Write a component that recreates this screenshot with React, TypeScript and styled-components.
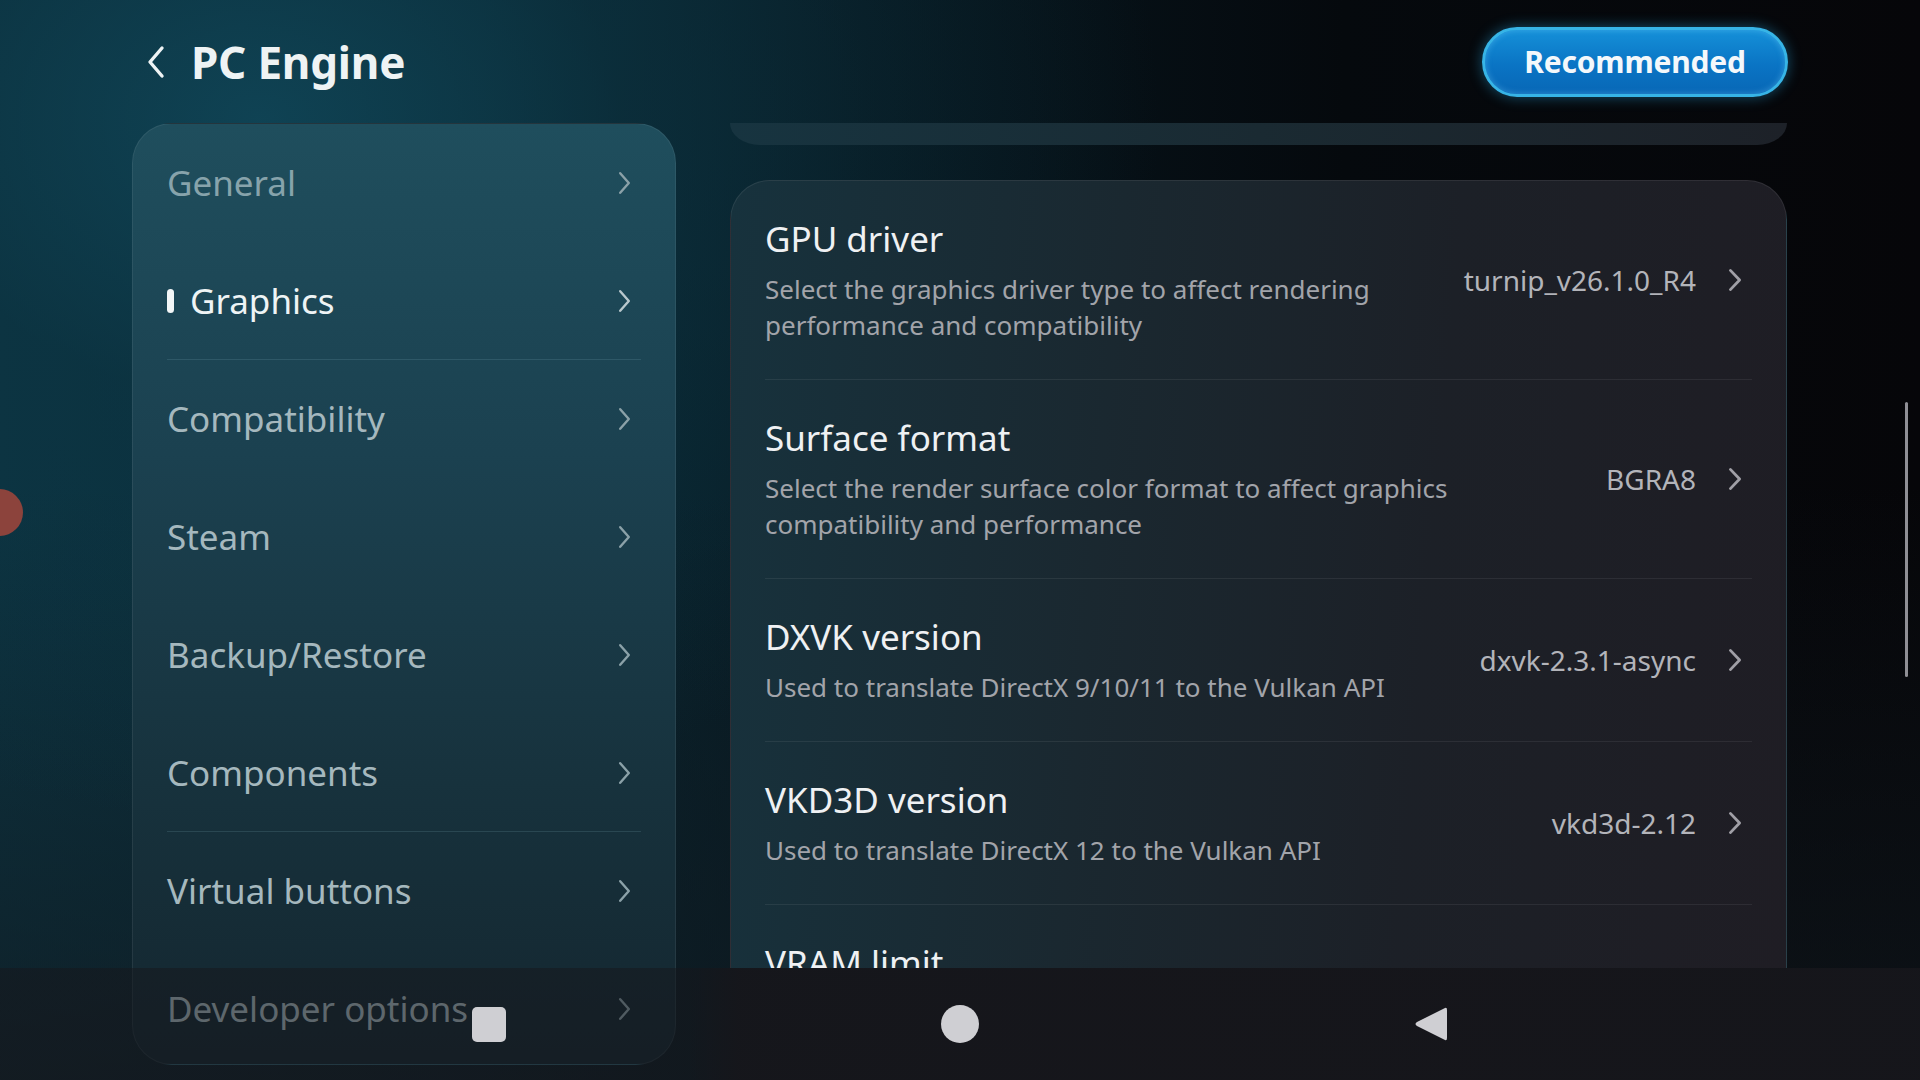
import React from 'react'
import styled, { createGlobalStyle } from 'styled-components'

const GlobalStyle = createGlobalStyle`
  html, body {
    margin: 0;
    padding: 0;
    background: #06080b;
  }
  * {
    box-sizing: border-box;
  }
`

const MENU = [
  { label: 'General', dim: true },
  { label: 'Graphics', active: true, divider: true },
  { label: 'Compatibility' },
  { label: 'Steam' },
  { label: 'Backup/Restore' },
  { label: 'Components', divider: true },
  { label: 'Virtual buttons' },
  { label: 'Developer options' },
]

const SETTINGS = [
  {
    title: 'GPU driver',
    desc: 'Select the graphics driver type to affect rendering performance and compatibility',
    value: 'turnip_v26.1.0_R4',
  },
  {
    title: 'Surface format',
    desc: 'Select the render surface color format to affect graphics compatibility and performance',
    value: 'BGRA8',
  },
  {
    title: 'DXVK version',
    desc: 'Used to translate DirectX 9/10/11 to the Vulkan API',
    value: 'dxvk-2.3.1-async',
  },
  {
    title: 'VKD3D version',
    desc: 'Used to translate DirectX 12 to the Vulkan API',
    value: 'vkd3d-2.12',
  },
  { title: 'VRAM limit', desc: '', value: '' },
]

const Screen = styled.div`
  position: relative;
  width: 1920px;
  height: 1080px;
  overflow: hidden;
  font-family: 'Noto Sans', 'Open Sans', sans-serif;
  background:
    radial-gradient(ellipse 900px 700px at 260px 120px, rgba(16, 70, 88, 0.85) 0%, rgba(12, 52, 66, 0.6) 40%, rgba(10, 40, 52, 0) 100%),
    linear-gradient(180deg, rgba(0, 0, 0, 0) 45%, rgba(16, 24, 30, 0.7) 100%),
    linear-gradient(90deg, #0c3442 0%, #0a2a36 25%, #07171f 45%, #05090d 70%, #060609 100%);
`

const Header = styled.header`
  height: 123px;
  display: flex;
  align-items: center;
  justify-content: space-between;
  padding: 0 132px 0 147px;
`

const TitleGroup = styled.div`
  display: flex;
  align-items: center;
  gap: 26px;
`

const Title = styled.h1`
  margin: 0;
  font-size: 44px;
  font-weight: 700;
  color: #eef3f4;
  letter-spacing: -0.2px;
`

const RecommendedButton = styled.button`
  width: 306px;
  height: 70px;
  border-radius: 35px;
  border: 3px solid #37b4e6;
  background: linear-gradient(180deg, #1590d8 0%, #0a74c4 55%, #0867b6 100%);
  box-shadow: 0 0 14px rgba(40, 170, 230, 0.45), inset 0 0 6px rgba(120, 210, 255, 0.4);
  color: #f4f8fb;
  font-family: 'Noto Sans', sans-serif;
  font-size: 30px;
  font-weight: 700;
  letter-spacing: -0.2px;
  cursor: pointer;
`

const Body = styled.div`
  display: flex;
  gap: 54px;
  padding: 0 133px 0 132px;
`

const SidePanel = styled.nav`
  width: 544px;
  height: 942px;
  flex-shrink: 0;
  padding: 0 34px;
  border-radius: 40px;
  border: 1.5px solid rgba(255, 255, 255, 0.07);
  background: linear-gradient(180deg, #1f4e5d 0%, #1b4150 35%, #17323d 70%, #14262f 100%);
`

const MenuItem = styled.div<{ $divider?: boolean }>`
  height: 118px;
  display: flex;
  align-items: center;
  justify-content: space-between;
  padding-right: 10px;
  border-bottom: 1px solid ${(p) => (p.$divider ? 'rgba(140, 190, 205, 0.16)' : 'transparent')};
`

const MenuLabel = styled.span<{ $active?: boolean; $dim?: boolean }>`
  display: flex;
  align-items: center;
  gap: 16px;
  font-size: 35px;
  color: ${(p) => (p.$active ? '#eef4f5' : p.$dim ? '#87a3ab' : '#a5b8be')};
`

const ActiveBar = styled.span`
  width: 7px;
  height: 24px;
  border-radius: 4px;
  background: #f2f6f7;
`

const Content = styled.section`
  flex: 1;
  height: 845px;
  overflow: hidden;
  display: flex;
  flex-direction: column;
  gap: 35px;
`

const PrevCardEdge = styled.div`
  height: 22px;
  flex-shrink: 0;
  border-radius: 0 0 30px 30px / 0 0 22px 22px;
  background: linear-gradient(90deg, #173440 0%, #1a2a32 50%, #1d2128 100%);
`

const Card = styled.div`
  flex-shrink: 0;
  padding: 0 34px;
  border-radius: 40px;
  border: 1.5px solid rgba(255, 255, 255, 0.08);
  background: linear-gradient(95deg, #17323d 0%, #1a2830 35%, #1c2027 65%, #1f1d24 100%);
`

const Row = styled.div`
  display: flex;
  align-items: center;
  justify-content: space-between;
  gap: 40px;
  padding: 35px 0 36px;
  border-bottom: 1px solid rgba(255, 255, 255, 0.07);
`

const RowText = styled.div`
  max-width: 720px;
`

const RowTitle = styled.div`
  font-size: 35px;
  line-height: 46px;
  color: #eff1f3;
`

const RowDesc = styled.div`
  margin-top: 9px;
  font-size: 26px;
  line-height: 36px;
  color: #a2a4aa;
`

const RowValue = styled.div`
  display: flex;
  align-items: center;
  gap: 32px;
  padding-right: 10px;
  font-size: 28px;
  color: #b3b4ba;
  white-space: nowrap;
`

const ScrollThumb = styled.div`
  position: absolute;
  left: 1905px;
  top: 402px;
  width: 3px;
  height: 275px;
  border-radius: 2px;
  background: #8f8f95;
`

const FloatingDot = styled.div`
  position: absolute;
  left: -24px;
  top: 489px;
  width: 47px;
  height: 47px;
  border-radius: 50%;
  background: #8c433c;
`

const NavBar = styled.div`
  position: absolute;
  left: 0;
  right: 0;
  bottom: 0;
  height: 112px;
  display: flex;
  align-items: center;
  justify-content: center;
  gap: 431px;
  background: linear-gradient(90deg, rgba(22, 22, 27, 0.5) 0%, rgba(22, 22, 27, 0.5) 36%, rgba(22, 22, 27, 0.93) 38.5%, rgba(22, 22, 27, 0.95) 100%);
`

const NavSlot = styled.div`
  width: 40px;
  height: 40px;
  display: flex;
  align-items: center;
  justify-content: center;
`

const NavSquare = styled.div`
  width: 34px;
  height: 35px;
  border-radius: 5px;
  background: #cfcfd3;
`

const NavCircle = styled.div`
  width: 38px;
  height: 38px;
  border-radius: 50%;
  background: #cfcfd3;
`

const Chevron = ({ color, w = 14, h = 24, sw = 2.6 }: { color: string; w?: number; h?: number; sw?: number }) => (
  <svg width={w} height={h} viewBox={`0 0 ${w} ${h}`} fill="none">
    <polyline
      points={`${sw / 2 + 1},${sw / 2 + 1} ${w - sw / 2 - 1},${h / 2} ${sw / 2 + 1},${h - sw / 2 - 1}`}
      stroke={color}
      strokeWidth={sw}
      strokeLinecap="round"
      strokeLinejoin="round"
    />
  </svg>
)

const BackIcon = () => (
  <svg width="18" height="34" viewBox="0 0 18 34" fill="none">
    <polyline points="15,3 3,17 15,31" stroke="#eef3f4" strokeWidth="3.4" strokeLinecap="round" strokeLinejoin="round" />
  </svg>
)

const BackTriangle = () => (
  <svg width="36" height="40" viewBox="0 0 36 40" fill="none">
    <path d="M32 4 Q34 3 34 6 L34 34 Q34 37 32 36 L4 22 Q1 20 4 18 Z" fill="#cfcfd3" />
  </svg>
)

export default function App() {
  return (
    <>
      <GlobalStyle />
      <Screen>
        <Header>
          <TitleGroup>
            <BackIcon />
            <Title>PC Engine</Title>
          </TitleGroup>
          <RecommendedButton>Recommended</RecommendedButton>
        </Header>
        <Body>
          <SidePanel>
            {MENU.map((item) => (
              <MenuItem key={item.label} $divider={item.divider}>
                <MenuLabel $active={item.active} $dim={item.dim}>
                  {item.active && <ActiveBar />}
                  {item.label}
                </MenuLabel>
                <Chevron color={item.active ? '#b9c8cd' : '#8ba1a8'} w={13} h={24} sw={2.4} />
              </MenuItem>
            ))}
          </SidePanel>
          <Content>
            <PrevCardEdge />
            <Card>
              {SETTINGS.map((s) => (
                <Row key={s.title}>
                  <RowText>
                    <RowTitle>{s.title}</RowTitle>
                    {s.desc && <RowDesc>{s.desc}</RowDesc>}
                  </RowText>
                  {s.value && (
                    <RowValue>
                      {s.value}
                      <Chevron color="#a09fa6" w={14} h={24} sw={2.8} />
                    </RowValue>
                  )}
                </Row>
              ))}
            </Card>
          </Content>
        </Body>
        <ScrollThumb />
        <FloatingDot />
        <NavBar>
          <NavSlot>
            <NavSquare />
          </NavSlot>
          <NavSlot>
            <NavCircle />
          </NavSlot>
          <NavSlot>
            <BackTriangle />
          </NavSlot>
        </NavBar>
      </Screen>
    </>
  )
}
